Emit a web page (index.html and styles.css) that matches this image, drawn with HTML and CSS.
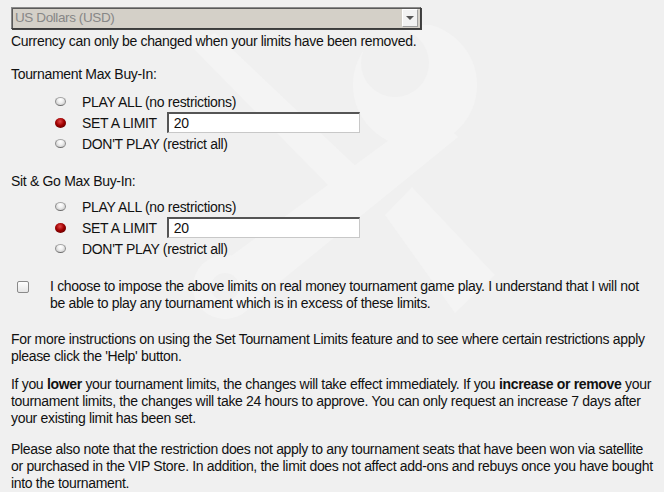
FILE: index.html
```html
<!DOCTYPE html>
<html>
<head>
<meta charset="utf-8">
<link rel="stylesheet" href="styles.css">
</head>
<body>
<div class="page">
  <svg class="watermark" width="420" height="300" viewBox="0 0 420 300">
    <g fill="#f4f4f4">
      <path d="M40 20 L65 8 L215 150 L190 172 Z"/>
      <circle cx="265" cy="60" r="62"/>
      <path d="M280 85 L308 112 L95 285 L58 248 Z"/>
      <circle cx="75" cy="262" r="32"/>
      <path d="M235 190 L262 162 L345 250 L305 288 Z"/>
    </g>
    <g fill="#f0f0f0">
      <circle cx="245" cy="38" r="34"/>
      <circle cx="75" cy="262" r="14"/>
    </g>
  </svg>

  <div class="select">
    <span class="select-text">US Dollars (USD)</span>
    <span class="select-btn"><span class="tri"></span></span>
  </div>
  <p class="note">Currency can only be changed when your limits have been removed.</p>

  <p class="heading">Tournament Max Buy-In:</p>
  <ul class="options">
    <li><span class="radio"></span><span>PLAY ALL (no restrictions)</span></li>
    <li><span class="radio on"></span><span>SET A LIMIT</span><span class="input">20</span></li>
    <li><span class="radio"></span><span>DON'T PLAY (restrict all)</span></li>
  </ul>

  <p class="heading h2">Sit &amp; Go Max Buy-In:</p>
  <ul class="options o2">
    <li><span class="radio"></span><span>PLAY ALL (no restrictions)</span></li>
    <li><span class="radio on"></span><span>SET A LIMIT</span><span class="input">20</span></li>
    <li><span class="radio"></span><span>DON'T PLAY (restrict all)</span></li>
  </ul>

  <div class="agree">
    <span class="checkbox"></span>
    <p>I choose to impose the above limits on real money tournament game play. I understand that I will not<br>be able to play any tournament which is in excess of these limits.</p>
  </div>

  <p class="para p1">For more instructions on using the Set Tournament Limits feature and to see where certain restrictions apply<br>please click the 'Help' button.</p>
  <p class="para p2">If you <b>lower</b> your tournament limits, the changes will take effect immediately. If you <b>increase or remove</b> your<br>tournament limits, the changes will take 24 hours to approve. You can only request an increase 7 days after<br>your existing limit has been set.</p>
  <p class="para p3">Please also note that the restriction does not apply to any tournament seats that have been won via satellite<br>or purchased in the VIP Store. In addition, the limit does not affect add-ons and rebuys once you have bought<br>into the tournament.</p>
</div>
</body>
</html>
```

FILE: styles.css
```css
html, body {
  margin: 0;
  padding: 0;
  background: #f0f0f0;
}
body {
  font-family: "Liberation Sans", Arial, sans-serif;
  font-size: 14px;
  letter-spacing: -0.32px;
  color: #111;
  width: 664px;
  height: 492px;
  overflow: hidden;
}
.page {
  position: relative;
  padding: 7px 0 0 11px;
}
.watermark {
  position: absolute;
  left: 150px;
  top: 25px;
  z-index: 0;
}
.page > *:not(.watermark) {
  position: relative;
  z-index: 1;
}
p { margin: 0; }
.select {
  width: 403px;
  height: 18px;
  background: #d4d0c8;
  border: 1px solid #8a8a8a;
  border-right-color: #3c3c3c;
  border-bottom-color: #3c3c3c;
  box-shadow: inset 1px 1px 0 #5a5a5a, 1px 1px 0 #444;
  display: flex;
  align-items: center;
  justify-content: space-between;
  padding: 1px 2px 1px 3px;
}
.select-text {
  color: #878787;
  font-size: 13.5px;
  letter-spacing: -0.4px;
  line-height: 18px;
}
.select-btn {
  width: 14px;
  height: 16px;
  background: #f2f2f2;
  border: 1px solid #fff;
  border-right-color: #a0a0a0;
  border-bottom-color: #a0a0a0;
  display: flex;
  align-items: center;
  justify-content: center;
}
.tri {
  width: 0;
  height: 0;
  border-left: 4px solid transparent;
  border-right: 4px solid transparent;
  border-top: 4px solid #555;
}
.note {
  margin-top: 4px;
  line-height: 17px;
}
.heading {
  margin-top: 16px;
  line-height: 17px;
}
.options {
  list-style: none;
  margin: 8px 0 0 0;
  padding: 0 0 0 44px;
}
.options.o2 {
  margin-top: 6px;
}
.options li {
  display: flex;
  align-items: center;
  height: 21px;
}
.radio {
  box-sizing: border-box;
  width: 11px;
  height: 9px;
  border-radius: 50%;
  background: radial-gradient(ellipse at 50% 25%, #ffffff 0%, #f0f0f0 40%, #bdbdbd 100%);
  border: 1px solid #8e8e8e;
  border-top-color: #a8a8a8;
  border-bottom-color: #6e6e6e;
  margin-right: 16px;
}
.radio.on {
  height: 10px;
  width: 11px;
  border: none;
  background: radial-gradient(circle at 45% 35%, #e04848 0%, #a00000 45%, #3c0000 100%);
}
.input {
  box-sizing: border-box;
  margin-left: 10px;
  width: 193px;
  height: 21px;
  line-height: 18px;
  background: #fff;
  border: 1px solid #c8c8c8;
  border-top: 2px solid #555;
  border-left: 2px solid #555;
  padding-left: 5px;
}
.h2 {
  margin-top: 19px;
}
.agree {
  display: flex;
  align-items: flex-start;
  margin-top: 19px;
}
.checkbox {
  flex: none;
  width: 10px;
  height: 10px;
  margin: 3px 0 0 6px;
  border: 1px solid #8a8a8a;
  border-radius: 2px;
  background: linear-gradient(#ffffff, #e6e6e6);
}
.agree p {
  margin-left: 21px;
  line-height: 17px;
  white-space: nowrap;
}
.para {
  line-height: 17px;
  white-space: nowrap;
}
.p1 { margin-top: 19px; }
.p2 { margin-top: 11px; }
.p3 { margin-top: 14px; }
b { font-weight: bold; }
```
